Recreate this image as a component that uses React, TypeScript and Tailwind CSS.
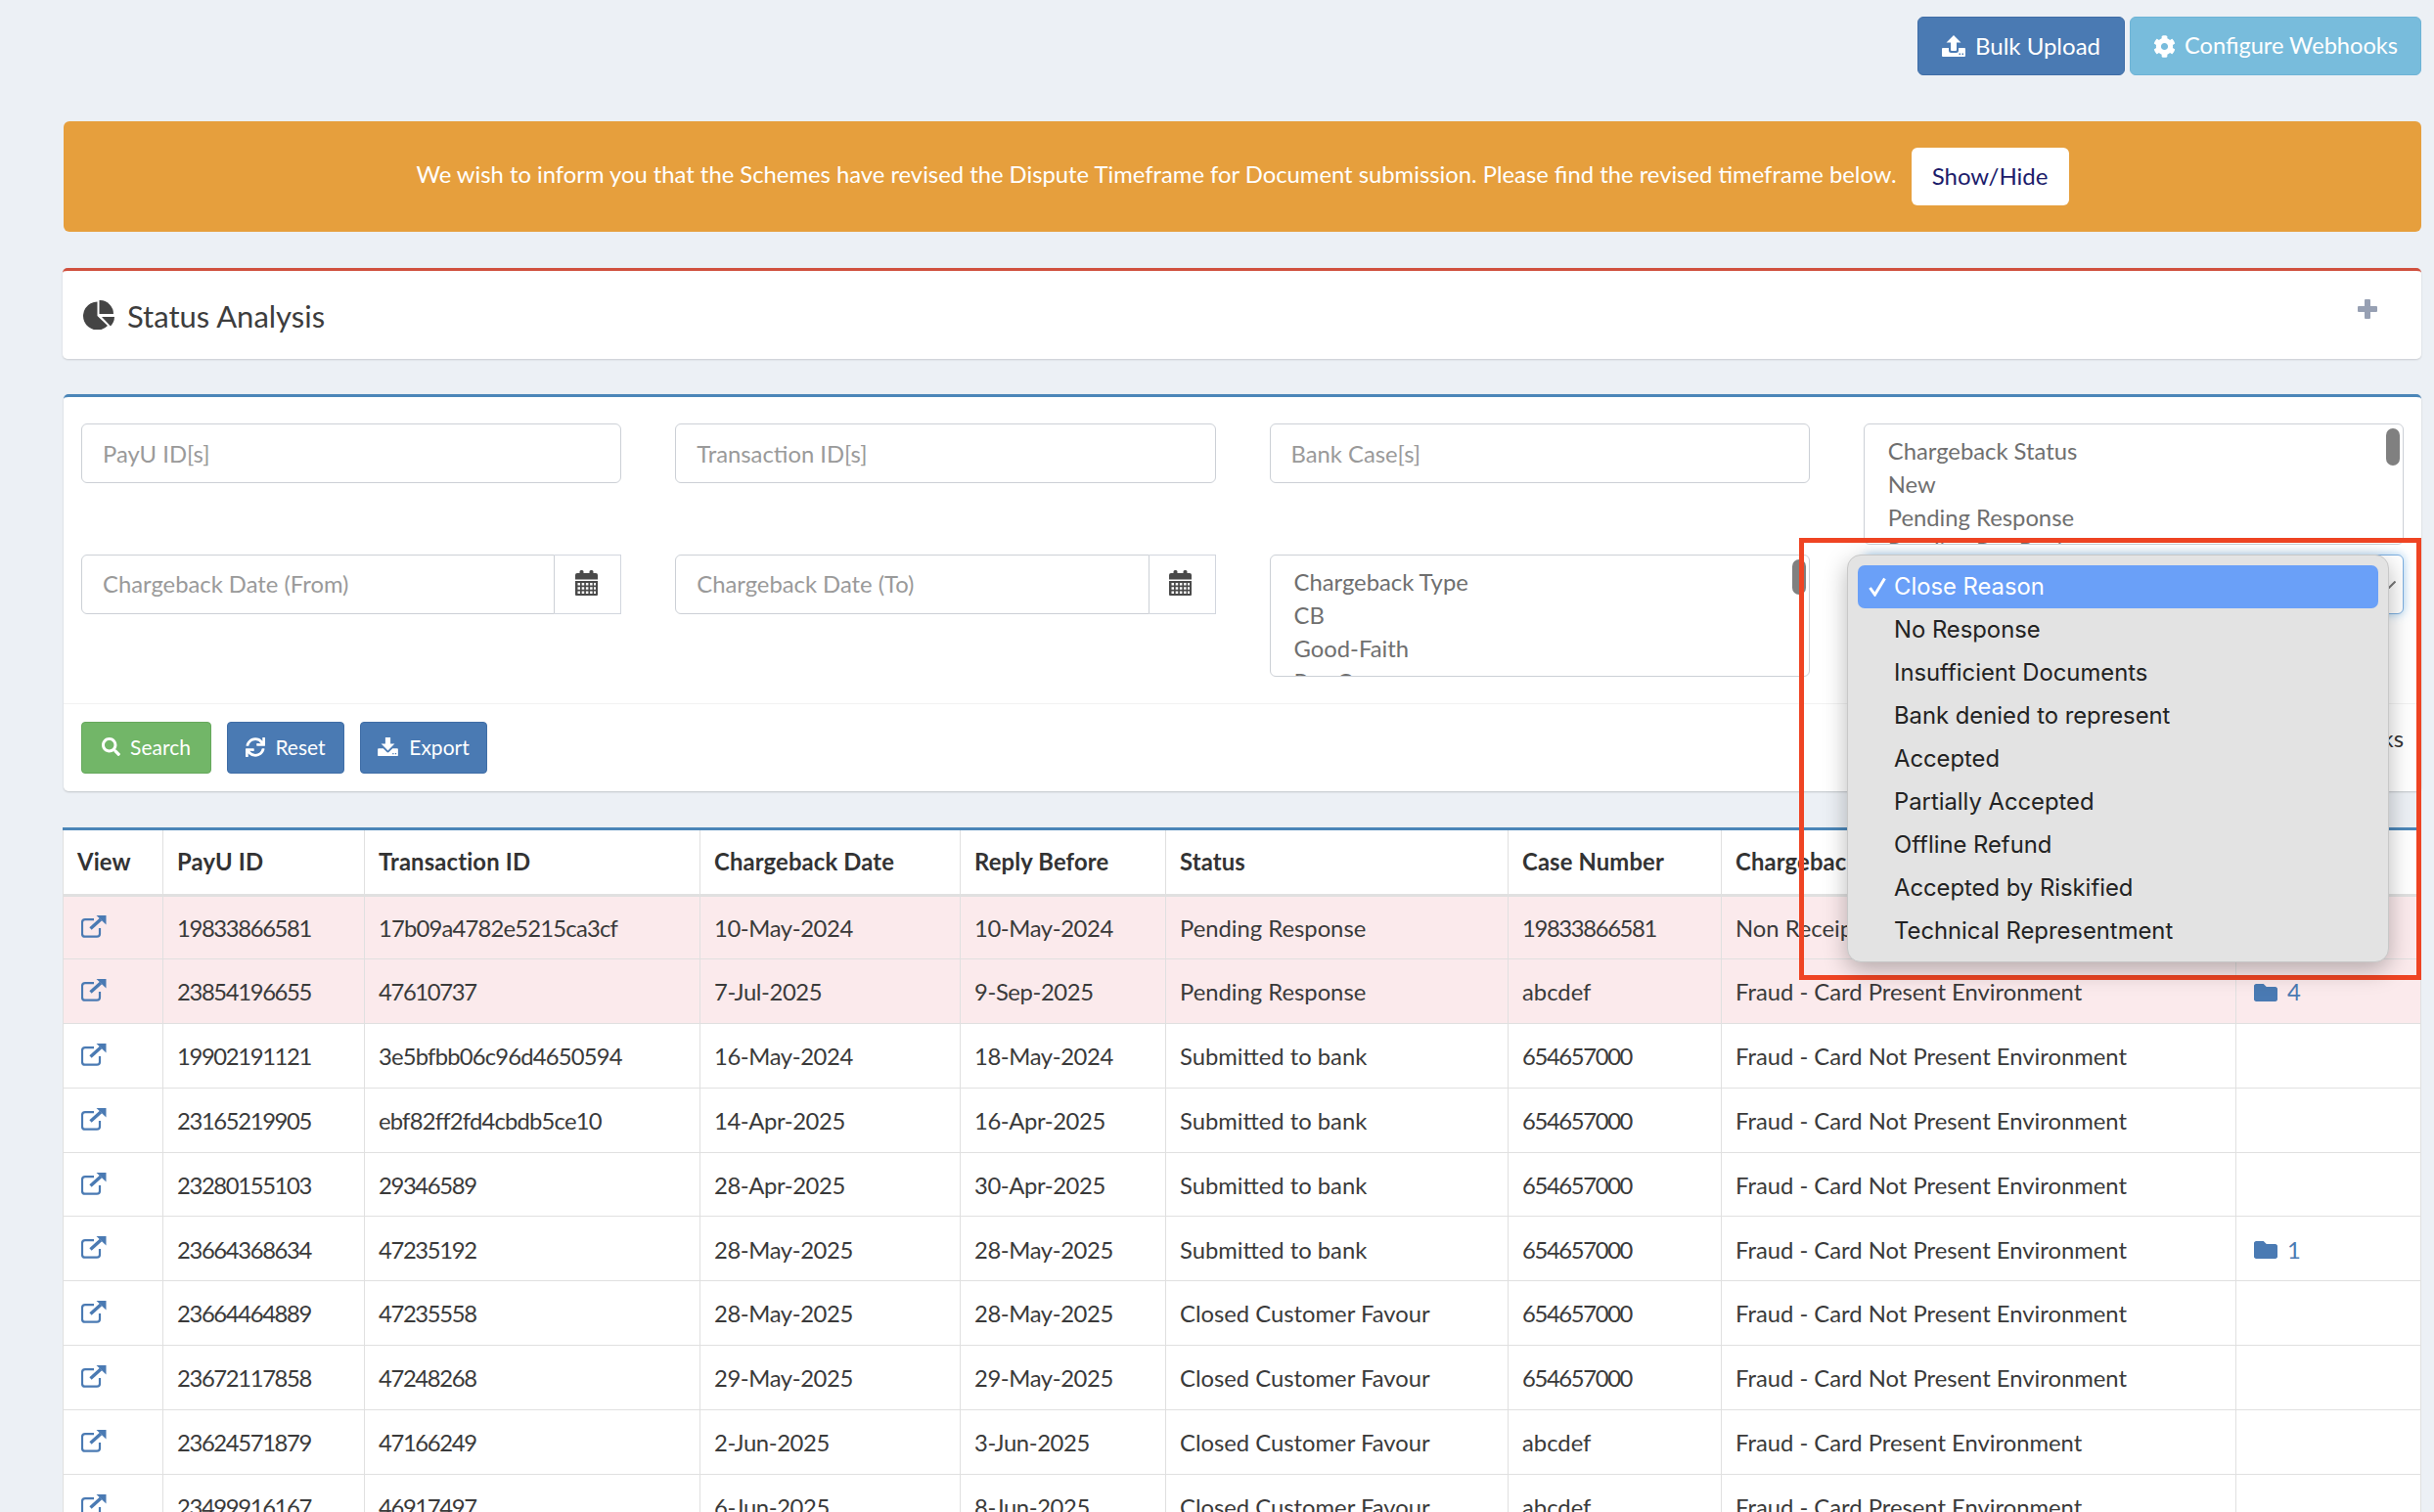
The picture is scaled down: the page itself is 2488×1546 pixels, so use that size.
import React from "react";
import { FaCog, FaSearch, FaSync, FaFolder } from "react-icons/fa";

const ExternalIcon = () => (
  <svg viewBox="0 0 26 23" className="block h-[23px] w-[26px] text-[#4a7ab3]" fill="none">
    <path d="M13 4.200H4a3 3 0 0 0-3 3v11.500a3 3 0 0 0 3 3h12a3 3 0 0 0 3-3V13" stroke="currentColor" strokeWidth="2.200" />
    <path d="M9.500 13.500 20 4" stroke="currentColor" strokeWidth="3.400" />
    <path d="M15.500 0h10v9.500z" fill="currentColor" />
  </svg>
);

const PieIcon = () => (
  <svg viewBox="0 0 32 30" className="block h-[30px] w-[32px] text-[#444]" fill="currentColor">
    <path d="M14.500 1.500V16L25 26A14.500 14.500 0 1 1 14.500 1.500z" />
    <path d="M16.500 0A14 14 0 0 1 31 14H16.500z" />
    <path d="M19 17H32A14 14 0 0 1 28 26.500z" />
  </svg>
);

const CalendarIcon = () => (
  <svg viewBox="0 0 23 26" className="block h-[26px] w-[23px] text-[#4a4a4a]" fill="currentColor">
    <path d="M0 5a2 2 0 0 1 2-2h2.500V1.500A1.500 1.500 0 0 1 6 0h1a1.500 1.500 0 0 1 1.500 1.500V3h6V1.500A1.500 1.500 0 0 1 16 0h1a1.500 1.500 0 0 1 1.500 1.500V3H21a2 2 0 0 1 2 2v4.500H0z" />
    <path
      fillRule="evenodd"
      d="M0 11h23v14a1 1 0 0 1-1 1H1a1 1 0 0 1-1-1zM2.500 13v2.500H5V13zm4.200 0v2.500h2.500V13zm4.200 0v2.500h2.500V13zm4.200 0v2.500h2.500V13zm3.900 0v2.500H21V13zM2.500 17.200v2.500H5v-2.500zm4.200 0v2.500h2.500v-2.500zm4.200 0v2.500h2.500v-2.500zm4.200 0v2.500h2.500v-2.500zm3.900 0v2.500H21v-2.500zM2.500 21.400v2.500H5v-2.500zm4.200 0v2.500h2.500v-2.500zm4.200 0v2.500h2.500v-2.500zm4.200 0v2.500h2.500v-2.500zm3.900 0v2.500H21v-2.500z"
    />
  </svg>
);

const UploadIcon = ({ cls }: { cls: string }) => (
  <svg viewBox="0 0 24 22" className={cls} fill="currentColor">
    <path d="M12 0l7.500 7.500H15v7.500a1 1 0 0 1-1 1h-4a1 1 0 0 1-1-1V7.500H4.500z" />
    <path
      fillRule="evenodd"
      d="M1 13h6v2.500A2.500 2.500 0 0 0 9.500 18h5a2.500 2.500 0 0 0 2.500-2.500V13h6a1 1 0 0 1 1 1v7a1 1 0 0 1-1 1H1a1 1 0 0 1-1-1v-7a1 1 0 0 1 1-1zm16.500 5.500v1.500H19v-1.500zm3 0v1.500H22v-1.500z"
    />
  </svg>
);

const DownloadIcon = ({ cls }: { cls: string }) => (
  <svg viewBox="0 0 24 22" className={cls} fill="currentColor">
    <path d="M9 0h6v7.500h5L12 15.500 4 7.500h5z" />
    <path
      fillRule="evenodd"
      d="M1 13h5.500l4 4a2 2 0 0 0 3 0l4-4H23a1 1 0 0 1 1 1v7a1 1 0 0 1-1 1H1a1 1 0 0 1-1-1v-7a1 1 0 0 1 1-1zm16.500 5.500v1.500H19v-1.500zm3 0v1.500H22v-1.500z"
    />
  </svg>
);

const PlusIcon = () => (
  <svg viewBox="0 0 20 20" className="mt-[29px] h-[20px] w-[20px] text-[#97a0b3]" fill="currentColor">
    <path d="M8 0h4a1 1 0 0 1 1 1v6h6a1 1 0 0 1 1 1v4a1 1 0 0 1-1 1h-6v6a1 1 0 0 1-1 1H8a1 1 0 0 1-1-1v-6H1a1 1 0 0 1-1-1V8a1 1 0 0 1 1-1h6V1a1 1 0 0 1 1-1z" />
  </svg>
);

const TextInput = ({ ph }: { ph: string }) => (
  <input
    readOnly
    placeholder={ph}
    className="block h-[61px] w-full rounded-[6px] border border-[#ccd0d6] bg-white px-[21px] text-[23.8px] outline-none placeholder:text-[#9a9a9a]"
  />
);

const DateInput = ({ ph }: { ph: string }) => (
  <div className="flex h-[61px]">
    <input
      readOnly
      placeholder={ph}
      className="min-w-0 flex-1 rounded-l-[6px] border border-[#ccd0d6] bg-white px-[21px] text-[23.8px] outline-none placeholder:text-[#9a9a9a]"
    />
    <div className="flex w-[68px] items-center justify-center border border-l-0 border-[#d2d6de] bg-white pb-[3px] pr-[3px]">
      <CalendarIcon />
    </div>
  </div>
);

const ListBox = ({ items, cls, thumb }: { items: string[]; cls: string; thumb: string }) => (
  <div className={`relative overflow-hidden rounded-[6px] border border-[#ccd0d6] bg-white pl-[24px] pt-[10px] text-[23.8px] leading-[34px] text-[#6f6f6f] ${cls}`}>
    {items.map((t) => (
      <div key={t}>{t}</div>
    ))}
    <div className={`absolute right-[3px] top-[4px] w-[14px] rounded-[7px] bg-[#808080] ${thumb}`} />
  </div>
);

const colWidths = ["w-[102px]", "w-[206px]", "w-[343px]", "w-[266px]", "w-[210px]", "w-[350px]", "w-[218px]", "w-[526px]", "w-[189px]"];
const headers = ["View", "PayU ID", "Transaction ID", "Chargeback Date", "Reply Before", "Status", "Case Number", "Chargeback Type", "Documents"];

const NP = "Fraud - Card Not Present Environment";
const P = "Fraud - Card Present Environment";
const SB = "Submitted to bank";
const CF = "Closed Customer Favour";
const PR = "Pending Response";
const N = "654657000";

const rows: { c: string[]; pink?: boolean; docs?: string }[] = [
  { c: ["19833866581", "17b09a4782e5215ca3cf", "10-May-2024", "10-May-2024", PR, "19833866581", "Non Receipt of Goods"], pink: true },
  { c: ["23854196655", "47610737", "7-Jul-2025", "9-Sep-2025", PR, "abcdef", P], pink: true, docs: "4" },
  { c: ["19902191121", "3e5bfbb06c96d4650594", "16-May-2024", "18-May-2024", SB, N, NP] },
  { c: ["23165219905", "ebf82ff2fd4cbdb5ce10", "14-Apr-2025", "16-Apr-2025", SB, N, NP] },
  { c: ["23280155103", "29346589", "28-Apr-2025", "30-Apr-2025", SB, N, NP] },
  { c: ["23664368634", "47235192", "28-May-2025", "28-May-2025", SB, N, NP], docs: "1" },
  { c: ["23664464889", "47235558", "28-May-2025", "28-May-2025", CF, N, NP] },
  { c: ["23672117858", "47248268", "29-May-2025", "29-May-2025", CF, N, NP] },
  { c: ["23624571879", "47166249", "2-Jun-2025", "3-Jun-2025", CF, "abcdef", P] },
  { c: ["23499916167", "46917497", "6-Jun-2025", "8-Jun-2025", CF, "abcdef", P] },
];

const cellTracking = (t: string, i: number) => {
  if (/^\d+$/.test(t)) return "tracking-[-1.35px]";
  if (i === 1) return "tracking-[-0.8px]";
  if (i === 2 || i === 3) return "tracking-[-0.38px]";
  return "";
};

const reasons = ["No Response", "Insufficient Documents", "Bank denied to represent", "Accepted", "Partially Accepted", "Offline Refund", "Accepted by Riskified", "Technical Representment"];

export default function App() {
  return (
    <div className="relative h-screen overflow-hidden bg-[#ecf0f5] pl-[64px] pr-[13px] pt-[17px] text-[#333] [font-family:Lato,'Noto_Sans',sans-serif]">
      <div className="flex justify-end gap-[5px]">
        <button className="flex h-[60px] w-[212px] items-center justify-center gap-[10px] rounded-[6px] border border-[#3f6da6] bg-[#4a7ab3] text-[24px] text-white">
          <UploadIcon cls="h-[22px] w-[24px]" />
          Bulk Upload
        </button>
        <button className="flex h-[60px] w-[298px] items-center justify-center gap-[9px] rounded-[6px] border border-[#6db3d6] bg-[#78bcdc] text-[23.6px] text-white">
          <FaCog className="text-[23px]" />
          Configure Webhooks
        </button>
      </div>

      <div className="ml-px mt-[47px] flex h-[113px] items-center justify-center rounded-[6px] bg-[#e69f3d] text-[23.8px] text-white">
        <span className="mb-[4px] mr-[15px]">We wish to inform you that the Schemes have revised the Dispute Timeframe for Document submission. Please find the revised timeframe below.</span>
        <button className="h-[59px] w-[161px] rounded-[6px] bg-white pb-[1px] text-[24px] text-[#1c1c6b]">Show/Hide</button>
      </div>

      <div className="mt-[37px] flex h-[93px] items-start justify-between rounded-[5px] border-t-[3px] border-[#d0503e] bg-white pl-[21px] pr-[45px] shadow-[0_1px_2px_rgba(0,0,0,0.15)]">
        <div className="mt-[26px] flex items-center gap-[13px]">
          <PieIcon />
          <span className="mt-[2px] text-[31px] leading-[36px] text-[#3d3d3d]">Status Analysis</span>
        </div>
        <PlusIcon />
      </div>

      <div className="ml-px mt-[36px] h-[406px] rounded-[5px] border-t-[3px] border-[#4b86b8] bg-white shadow-[0_1px_2px_rgba(0,0,0,0.18)]">
        <div className="grid h-[314px] grid-cols-4 grid-rows-[134px_1fr] gap-x-[55px] border-b border-[#f2f2f2] px-[18px] pt-[27px]">
          <TextInput ph="PayU ID[s]" />
          <TextInput ph="Transaction ID[s]" />
          <TextInput ph="Bank Case[s]" />
          <ListBox cls="h-[124px]" thumb="h-[38px]" items={["Chargeback Status", "New", "Pending Response", "Pending Pre-Review"]} />
          <DateInput ph="Chargeback Date (From)" />
          <DateInput ph="Chargeback Date (To)" />
          <ListBox cls="h-[125px]" thumb="h-[36px]" items={["Chargeback Type", "CB", "Good-Faith", "Pre-Comp"]} />
          <div className="flex h-[61px] items-center justify-between rounded-[6px] border border-[#7fb0e0] bg-white pl-[24px] pr-[7px] text-[23.8px] shadow-[0_0_10px_rgba(102,175,233,0.6)]">
            Close Reason
            <svg viewBox="0 0 14 8" className="h-[8px] w-[14px] text-[#777]" fill="none" stroke="currentColor" strokeWidth="2">
              <path d="M0.500 0.500 7 7 13.500 0.500" />
            </svg>
          </div>
        </div>
        <div className="flex items-start justify-between px-[18px] pt-[18px]">
          <div className="flex gap-[16px]">
            <button className="flex h-[53px] w-[133px] items-center justify-center gap-[10px] rounded-[4px] border border-[#66a85c] bg-[#72b668] pb-[2px] text-[21px] text-white">
              <FaSearch className="text-[19px]" />
              Search
            </button>
            <button className="flex h-[53px] w-[120px] items-center justify-center gap-[10px] rounded-[4px] border border-[#3f6da6] bg-[#4a7ab3] pb-[2px] text-[21px] text-white">
              <FaSync className="text-[20px]" />
              Reset
            </button>
            <button className="flex h-[53px] w-[130px] items-center justify-center gap-[11px] rounded-[4px] border border-[#3f6da6] bg-[#4a7ab3] pb-[2px] text-[21px] text-white">
              <DownloadIcon cls="h-[19px] w-[21px]" />
              Export
            </button>
          </div>
          <span className="text-[23.8px] text-[#333]">Chargebacks</span>
        </div>
      </div>

      <div className="mt-[37px] border-t-[3px] border-[#4b86b8] bg-white">
        <table className="w-[2411px] table-fixed border-collapse text-[23.8px]">
          <colgroup>
            {colWidths.map((w) => (
              <col key={w} className={w} />
            ))}
          </colgroup>
          <thead>
            <tr className="h-[66px]">
              {headers.map((h) => (
                <th key={h} className="border-x border-b-[3px] border-[#e0e0e0] px-[14px] pt-[2px] text-left font-bold tracking-[0.15px] text-[#333]">
                  {h}
                </th>
              ))}
            </tr>
          </thead>
          <tbody>
            {rows.map((r) => (
              <tr key={r.c[0]} className={`h-[65.8px] ${r.pink ? "bg-[#fbeaec]" : "bg-white"}`}>
                <td className="border border-[#e0e0e0] px-[18px]">
                  <div className="-mt-[2px]">
                    <ExternalIcon />
                  </div>
                </td>
                {r.c.map((t, i) => (
                  <td key={i} className={`overflow-hidden whitespace-nowrap border border-[#e0e0e0] px-[14px] pt-[3px] text-[#3a3a3a] ${cellTracking(t, i)}`}>
                    {t}
                  </td>
                ))}
                <td className="border border-[#e0e0e0] px-[18px] pt-[3px] text-[#4a7ab3]">
                  {r.docs && (
                    <span className="flex items-center gap-[10px]">
                      <FaFolder className="text-[24px]" />
                      {r.docs}
                    </span>
                  )}
                </td>
              </tr>
            ))}
          </tbody>
        </table>
      </div>

      <div className="absolute left-[1839px] top-[550px] h-[452px] w-[636px] border-[5px] border-[#ef4423]" />

      <div className="absolute left-[1888px] top-[567px] h-[417px] w-[554px] rounded-[14px] border border-[#c8c8c8] bg-[#e3e3e3] px-[10px] pt-[10px] text-[23.8px] text-[#222] shadow-[0_8px_24px_rgba(0,0,0,0.28)] [font-family:Inter,sans-serif]">
        <div className="flex h-[44px] items-center rounded-[7px] bg-[#6aa0f8] pl-[11px] text-white">
          <svg viewBox="0 0 18 20" className="mr-[8px] h-[20px] w-[18px] shrink-0" fill="none" stroke="currentColor" strokeWidth="3">
            <path d="M1.500 11l5 7L16.500 1.500" />
          </svg>
          Close Reason
        </div>
        {reasons.map((t) => (
          <div key={t} className="flex h-[44px] items-center pl-[37px]">
            {t}
          </div>
        ))}
      </div>
    </div>
  );
}
